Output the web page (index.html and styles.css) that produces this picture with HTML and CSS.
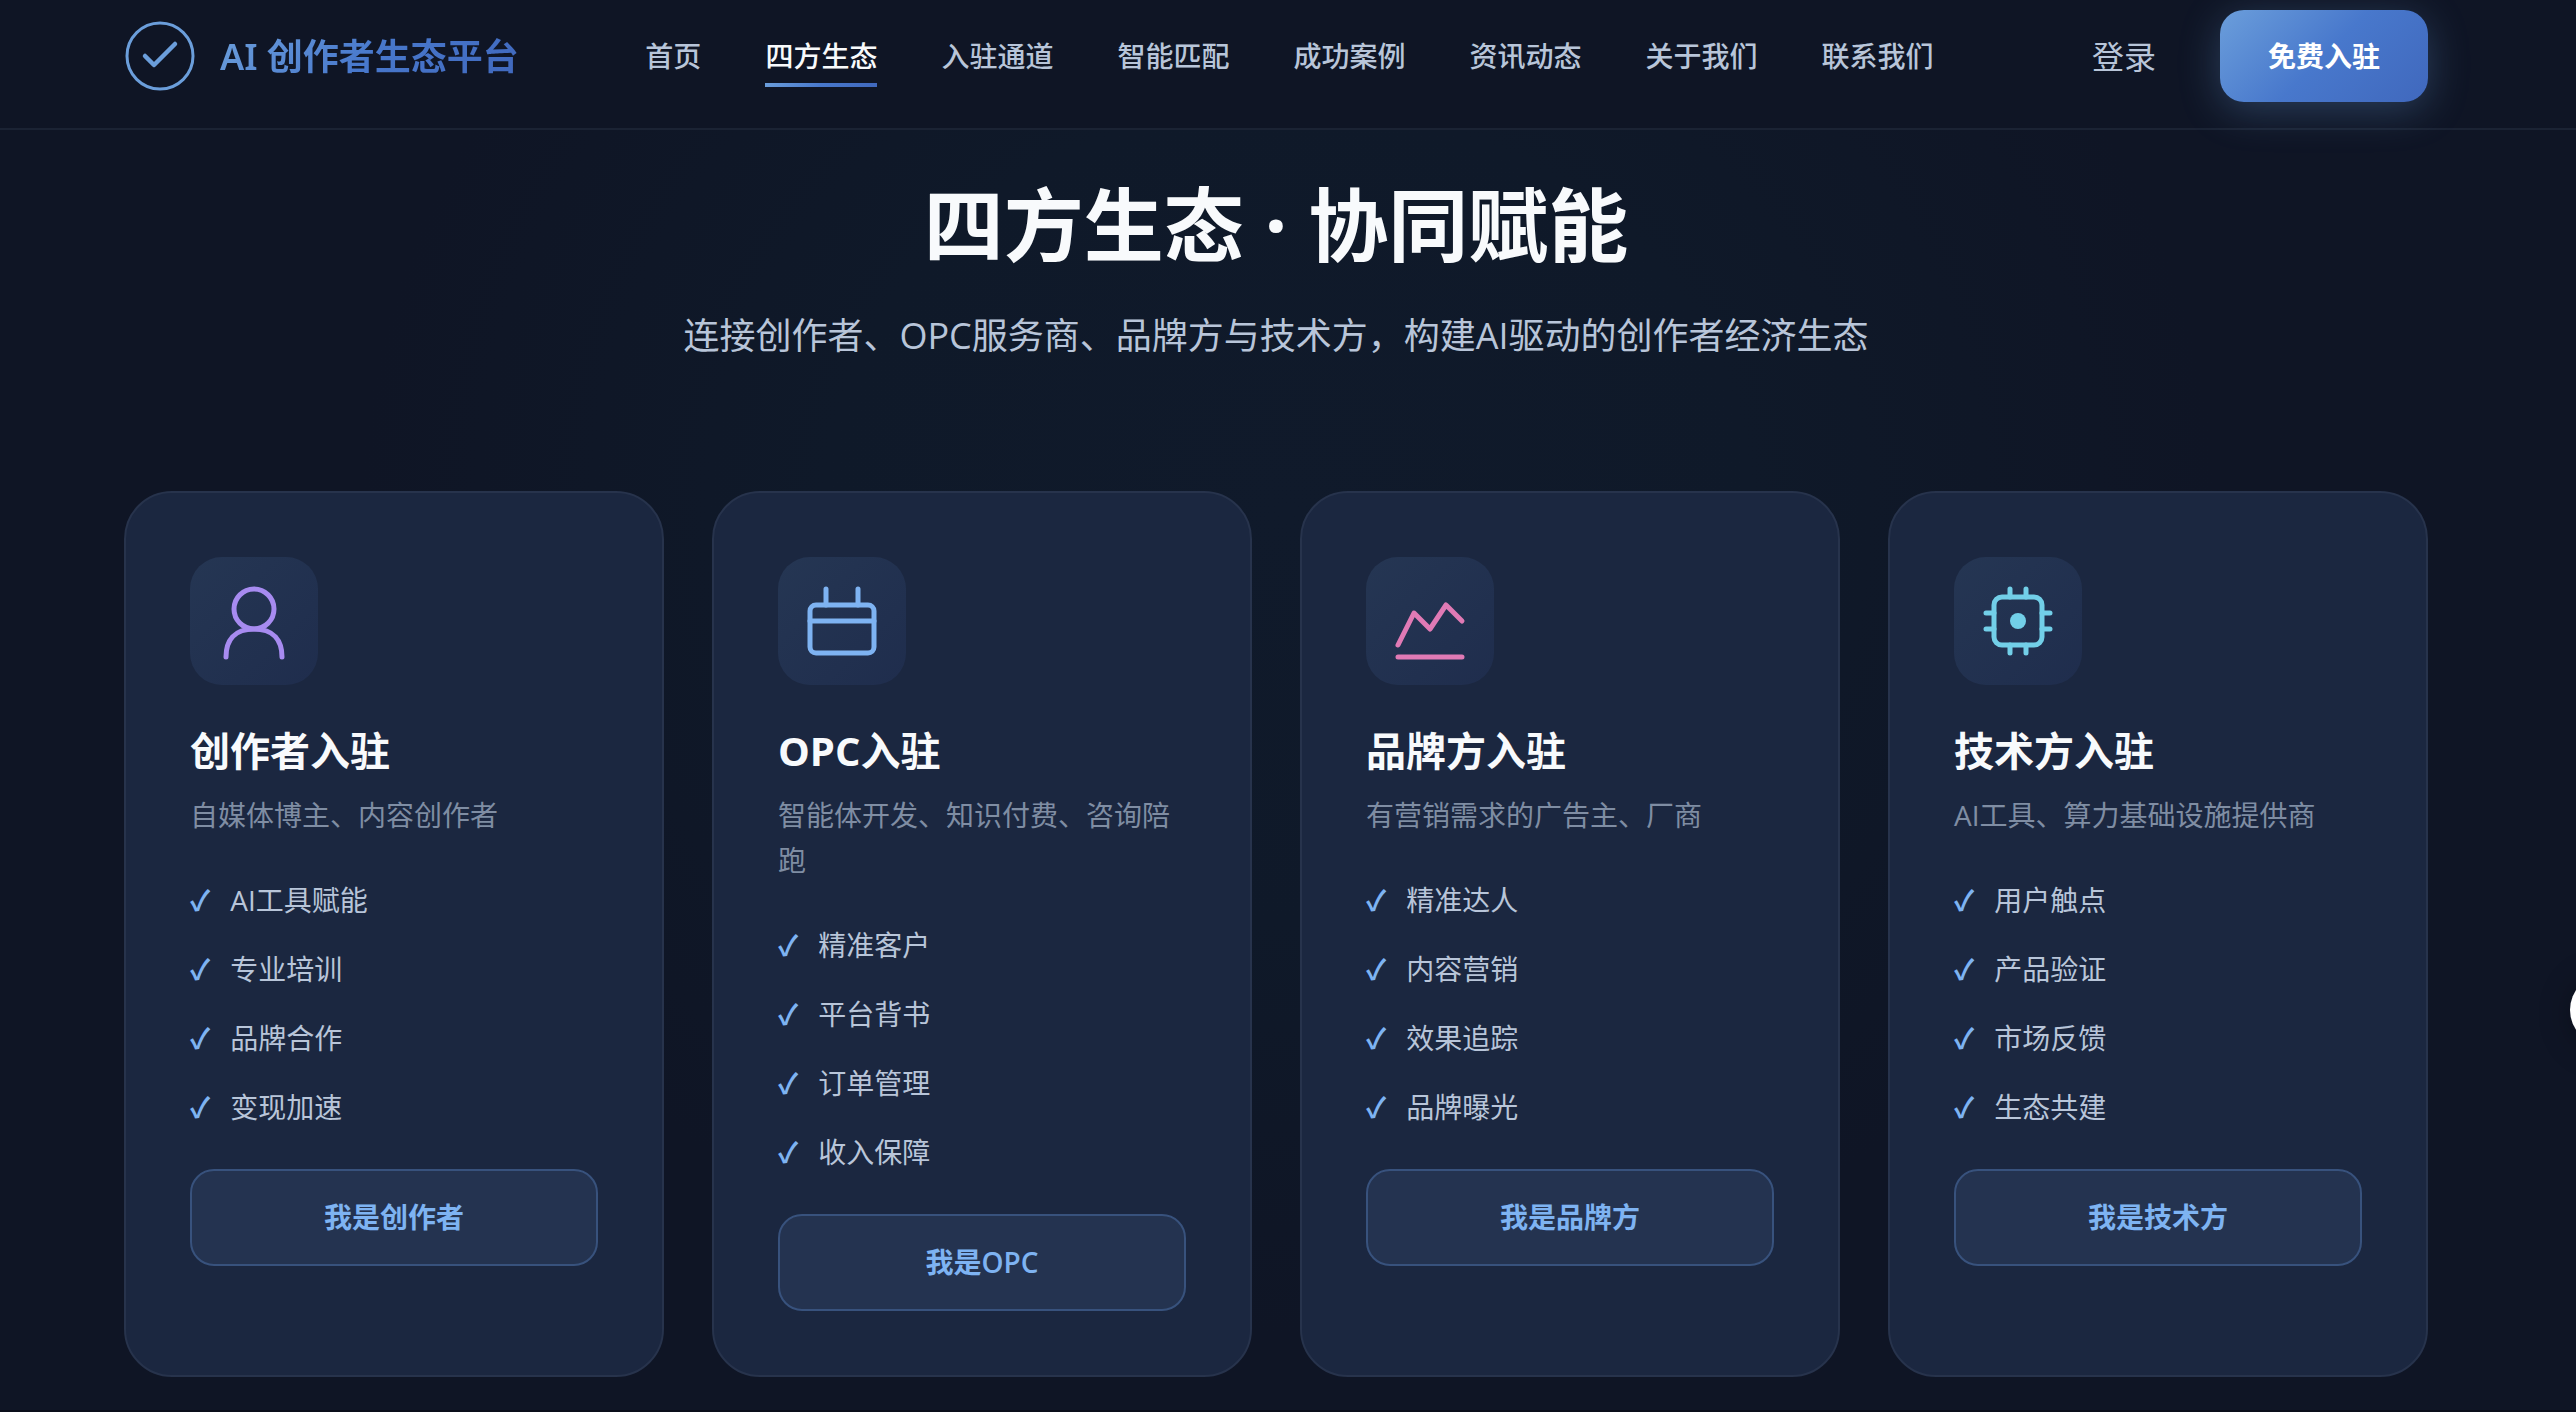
FILE: index.html
```html
<!DOCTYPE html>
<html lang="zh-CN">
<head>
  <meta charset="UTF-8">
  <meta name="viewport" content="width=device-width, initial-scale=1.0">
  <title>AI 创作者生态平台</title>
  <link rel="stylesheet" href="styles.css">
</head>
<body>
  <header class="header">
    <div class="container header-inner">
      <a href="#" class="logo">
        <svg class="logo-icon" viewBox="0 0 48 48" fill="none" stroke="#6b9edb" stroke-linecap="round" stroke-linejoin="round">
          <circle cx="24" cy="24" r="22" stroke-width="2"/>
          <path d="M14 24l6 6 14-14" stroke-width="3"/>
        </svg>
        <span class="logo-text">AI 创作者生态平台</span>
      </a>
      <nav class="nav">
        <a href="#" class="nav-link">首页</a>
        <a href="#" class="nav-link active">四方生态</a>
        <a href="#" class="nav-link">入驻通道</a>
        <a href="#" class="nav-link">智能匹配</a>
        <a href="#" class="nav-link">成功案例</a>
        <a href="#" class="nav-link">资讯动态</a>
        <a href="#" class="nav-link">关于我们</a>
        <a href="#" class="nav-link">联系我们</a>
      </nav>
      <div class="header-actions">
        <button class="btn-login">登录</button>
        <button class="btn-primary">免费入驻</button>
      </div>
    </div>
  </header>

  <main class="ecosystem">
    <div class="container">
      <div class="section-header">
        <h1>四方生态 · 协同赋能</h1>
        <p>连接创作者、OPC服务商、品牌方与技术方，构建AI驱动的创作者经济生态</p>
      </div>

      <div class="cards">
        <article class="card">
          <div class="card-icon creator">
            <svg viewBox="0 0 40 40">
              <circle cx="20" cy="14" r="10"/>
              <path d="M6 38c0-8 4-14 14-14s14 6 14 14"/>
            </svg>
          </div>
          <h3>创作者入驻</h3>
          <p class="card-desc">自媒体博主、内容创作者</p>
          <ul class="features">
            <li>AI工具赋能</li>
            <li>专业培训</li>
            <li>品牌合作</li>
            <li>变现加速</li>
          </ul>
          <button class="card-btn">我是创作者</button>
        </article>

        <article class="card">
          <div class="card-icon opc">
            <svg viewBox="0 0 40 40">
              <rect x="4" y="12" width="32" height="24" rx="3"/>
              <path d="M12 12V4M28 12V4M4 20h32"/>
            </svg>
          </div>
          <h3>OPC入驻</h3>
          <p class="card-desc">智能体开发、知识付费、咨询陪跑</p>
          <ul class="features">
            <li>精准客户</li>
            <li>平台背书</li>
            <li>订单管理</li>
            <li>收入保障</li>
          </ul>
          <button class="card-btn">我是OPC</button>
        </article>

        <article class="card">
          <div class="card-icon brand">
            <svg viewBox="0 0 40 40">
              <path d="M4 32l8-16 8 8 8-12 8 8M4 38h32"/>
            </svg>
          </div>
          <h3>品牌方入驻</h3>
          <p class="card-desc">有营销需求的广告主、厂商</p>
          <ul class="features">
            <li>精准达人</li>
            <li>内容营销</li>
            <li>效果追踪</li>
            <li>品牌曝光</li>
          </ul>
          <button class="card-btn">我是品牌方</button>
        </article>

        <article class="card">
          <div class="card-icon tech">
            <svg viewBox="0 0 40 40">
              <rect x="8" y="8" width="24" height="24" rx="4"/>
              <circle class="dot" cx="20" cy="20" r="4"/>
              <path d="M16 4v4M24 4v4M16 32v4M24 32v4M4 16h4M4 24h4M32 16h4M32 24h4"/>
            </svg>
          </div>
          <h3>技术方入驻</h3>
          <p class="card-desc">AI工具、算力基础设施提供商</p>
          <ul class="features">
            <li>用户触点</li>
            <li>产品验证</li>
            <li>市场反馈</li>
            <li>生态共建</li>
          </ul>
          <button class="card-btn">我是技术方</button>
        </article>
      </div>
    </div>
  </main>

  <button class="float-btn" aria-label="在线客服"></button>
</body>
</html>
```
FILE: styles.css
```css
* {
  margin: 0;
  padding: 0;
  box-sizing: border-box;
}

:root {
  --gradient: linear-gradient(135deg, #6b9edb 0%, #4878cc 50%, #4068bd 100%);
  --text: #f8fafc;
  --text-soft: #b8c5d9;
  --text-muted: #7f8da3;
  --accent: #7eb3f2;
}

body {
  font-family: "Open Sans", "Noto Sans CJK SC", sans-serif;
  font-size: 28px;
  line-height: 45px;
  color: var(--text);
  background: #0a0e1a;
  overflow-x: hidden;
  padding-right: 24px;
}

button {
  font: inherit;
  border: none;
  cursor: pointer;
}

.container {
  max-width: 2400px;
  margin: 0 auto;
  padding: 0 48px;
}

/* Header */
.header {
  background: #0f1525;
  border-bottom: 2px solid #1b2334;
  margin-right: -24px;
  padding: 10px 24px 26px 0;
}

.header-inner {
  display: flex;
  align-items: center;
  justify-content: space-between;
}

.logo {
  display: flex;
  align-items: center;
  gap: 24px;
  text-decoration: none;
}

.logo-icon {
  width: 72px;
  height: 72px;
}

.logo-text {
  font-family: "Noto Sans", "Noto Sans CJK SC", sans-serif;
  font-size: 36px;
  font-weight: 600;
  background: var(--gradient);
  -webkit-background-clip: text;
  background-clip: text;
  color: transparent;
}

.nav {
  display: flex;
  gap: 64px;
}

.nav-link {
  position: relative;
  color: var(--text-soft);
  font-weight: 500;
  text-decoration: none;
}

.nav-link.active {
  color: var(--text);
}

.nav-link.active::after {
  content: "";
  position: absolute;
  left: 0;
  right: 0;
  bottom: -8px;
  height: 4px;
  background: var(--gradient);
}

.header-actions {
  display: flex;
  align-items: center;
  gap: 32px;
}

.btn-login {
  padding: 0 32px;
  font-size: 32px;
  color: var(--text-soft);
  background: transparent;
}

.btn-primary {
  height: 92px;
  padding: 0 48px;
  font-weight: 700;
  color: #fff;
  background: var(--gradient);
  border-radius: 24px;
  box-shadow: 0 8px 40px rgba(107, 158, 219, 0.3);
}

/* Ecosystem */
.ecosystem {
  margin-right: -24px;
  padding: 46px 24px 33px 0;
  background: radial-gradient(ellipse 36% 64% at 50% 30%, #101a2b 0%, #0f1929 50%, #0f1525 100%) #0f1525;
}

.section-header {
  margin-bottom: 126px;
  text-align: center;
}

.section-header h1 {
  margin-bottom: 35px;
  font-size: 80px;
  line-height: 96px;
  font-weight: 700;
}

.section-header p {
  font-size: 36px;
  line-height: 58px;
  color: var(--text-soft);
}

.cards {
  display: grid;
  grid-template-columns: repeat(4, 1fr);
  gap: 48px;
}

.card {
  padding: 64px;
  background: #1b2740;
  border: 2px solid #27334c;
  border-radius: 48px;
}

.card-icon {
  display: flex;
  align-items: center;
  justify-content: center;
  width: 128px;
  height: 128px;
  margin-bottom: 34px;
  border-radius: 32px;
  background: linear-gradient(135deg, #253653 0%, #1f2d4d 100%);
}

.card-icon svg {
  width: 80px;
  height: 80px;
  fill: none;
  stroke: currentColor;
  stroke-width: 2.5;
  stroke-linecap: round;
  stroke-linejoin: round;
}

.card-icon .dot {
  fill: currentColor;
  stroke: none;
}

.creator {
  color: #a78bf0;
}

.opc {
  color: #7eb3f2;
}

.brand {
  color: #e07ab5;
}

.tech {
  color: #72cfe8;
}

.card h3 {
  margin-bottom: 10px;
  font-size: 40px;
  line-height: 64px;
  font-weight: 700;
}

.card-desc {
  margin-bottom: 40px;
  color: var(--text-muted);
}

.features {
  display: flex;
  flex-direction: column;
  gap: 24px;
  margin-bottom: 39px;
  list-style: none;
  color: var(--text-soft);
}

.features li {
  display: flex;
  gap: 20px;
}

.features li::before {
  content: "✓";
  color: var(--accent);
  font-weight: 700;
}

.card-btn {
  width: 100%;
  padding: 24px;
  font-weight: 600;
  color: var(--accent);
  background: #243350;
  border: 2px solid #38527d;
  border-radius: 24px;
}

/* Help bubble docked to the window edge */
.float-btn {
  position: fixed;
  top: 974px;
  right: -66px;
  width: 72px;
  height: 72px;
  background: #fff;
  border-radius: 50%;
  box-shadow: 0 4px 32px rgba(0, 0, 0, 0.3);
}
```
